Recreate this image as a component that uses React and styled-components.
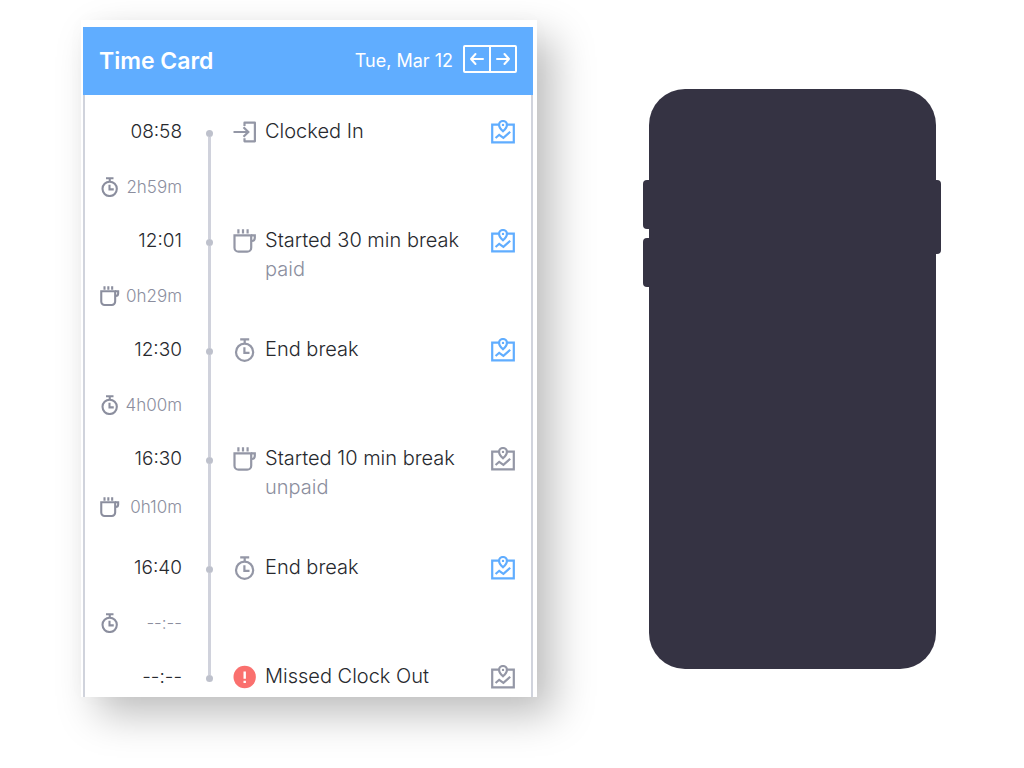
import styled, { createGlobalStyle } from 'styled-components'

const GlobalStyle = createGlobalStyle`
  * {
    box-sizing: border-box;
  }
  body {
    margin: 0;
    background: #fff;
    color: #27292e;
    font-family: Inter, "Open Sans", sans-serif;
  }
`

const Page = styled.main`
  display: grid;
  grid-template-columns: minmax(0, 1fr) 298px;
  column-gap: 106px;
  align-items: start;
  padding: 20px 83px 71px 81px;

  @media (max-width: 900px) {
    grid-template-columns: minmax(0, 1fr);
    row-gap: 40px;
    padding: 20px;
  }
`

const Card = styled.section`
  padding: 7px 4px 0 2px;
  background: #fff;
  box-shadow: 17px 18px 38px rgba(0, 0, 0, 0.25), 0 0 20px rgba(0, 0, 0, 0.02);
`

const CardHeader = styled.header`
  display: flex;
  align-items: center;
  min-height: 68px;
  padding: 0 16px;
  background: #60adff;
  color: #fff;
`

const Title = styled.h1`
  flex: 1;
  margin: 0;
  font-size: 23px;
  font-weight: 600;
  line-height: 28px;
`

const DateLabel = styled.span`
  margin-right: 10px;
  font-size: 18px;
  line-height: 28px;
`

const DayNav = styled.nav`
  display: flex;
  margin-bottom: 4px;
  border: 2px solid #fff;
  border-radius: 2px;
`

const DayButton = styled.button`
  display: flex;
  align-items: center;
  justify-content: center;
  width: 24px;
  height: 24px;
  padding: 0;
  border: 0;
  background: none;
  color: inherit;
  cursor: pointer;

  & + & {
    width: 26px;
    border-left: 2px solid #fff;
  }
`

const Timeline = styled.ol`
  margin: 0;
  padding: 22px 16px 5px 15px;
  border: solid #d0d3dc;
  border-width: 0 2px;
  list-style: none;
`

const Entry = styled.li`
  display: flex;
  min-height: ${(p) => (p.$last ? '29px' : '109px')};
`

const TimeColumn = styled.div`
  width: 82px;
`

const Time = styled.div`
  font-size: 19px;
  font-weight: 300;
  line-height: 30px;
  text-align: right;
`

const Duration = styled.div`
  display: flex;
  align-items: center;
  justify-content: space-between;
  margin-top: ${(p) => (p.$compact ? '19px' : '26px')};
  color: #8b8e9e;
  font-size: 17px;
  font-weight: 300;
  line-height: 28px;
`

const Rail = styled.div`
  display: flex;
  flex-direction: column;
  align-items: center;
  width: 7px;
  margin: 0 20px 0 24px;
`

const Line = styled.span`
  width: 3px;
  flex: ${(p) => (p.$lead ? '0 0 13px' : '1')};
  background: ${(p) => (p.$hidden ? 'transparent' : '#d0d2dc')};
`

const Dot = styled.span`
  width: 7px;
  height: 7px;
  border-radius: 50%;
  background: #bec1cc;
`

const EventIcon = styled.div`
  display: flex;
  width: 24px;
  height: 29px;
  align-items: center;
  margin-right: 8px;
  color: #9497a6;
`

const EventText = styled.div`
  flex: 1;
  min-width: 0;
  font-size: 20px;
  font-weight: 300;
  line-height: 29px;
`

const Note = styled.div`
  color: #8b8e9e;
`

const MapButton = styled.button`
  display: flex;
  align-items: center;
  height: 29px;
  padding: 0;
  border: 0;
  background: none;
  color: ${(p) => (p.$located ? '#60adff' : '#9497a6')};
  cursor: pointer;
`

const Phone = styled.div`
  display: flex;
  margin-top: 69px;
`

const PhoneBody = styled.div`
  flex: 1;
  height: 580px;
  border-radius: 36px;
  background: #353343;
`

const PhoneSide = styled.div`
  display: flex;
  flex-direction: column;
  gap: 9px;
  padding-top: 91px;
`

const SideKey = styled.span`
  width: ${(p) => (p.$right ? '5px' : '6px')};
  height: ${(p) => (p.$right ? '74px' : '49px')};
  border-radius: ${(p) => (p.$right ? '0 4px 4px 0' : '4px 0 0 4px')};
  background: #353343;
`

const Icon = ({ size = 24, stroke = 2.2, children }) => (
  <svg
    width={size}
    height={size}
    viewBox="0 0 24 24"
    fill="none"
    stroke="currentColor"
    strokeWidth={stroke}
    aria-hidden="true"
  >
    {children}
  </svg>
)

const ClockInIcon = (props) => (
  <Icon {...props}>
    <path d="M0.5 12H15M10.5 7.3l4.8 4.7-4.8 4.7" />
    <path d="M11.5 6V2.7H21.9V21.3H11.5V18.2" strokeLinejoin="round" />
  </Icon>
)

const CupIcon = (props) => (
  <Icon {...props}>
    <path d="M1.5 6.3H18.2V18.7a4 4 0 0 1-4 4H5.5a4 4 0 0 1-4-4Z" />
    <path d="M18 6.3H21.8V9a3 3 0 0 1-3 3H18" />
    <path d="M5.4 0.3V4.4M10 0.3V4.4M14.6 0.3V4.4" />
  </Icon>
)

const StopwatchIcon = (props) => (
  <Icon {...props}>
    <circle cx="11.6" cy="14.2" r="8.6" />
    <path d="M7.2 1.4H16.2M11.7 2V5.5" />
    <path d="M11.4 9.3V14.8H16.5" />
  </Icon>
)

const AlertIcon = (props) => (
  <Icon {...props}>
    <circle cx="11.7" cy="12" r="11.2" fill="#fa706e" stroke="none" />
    <path d="M11.7 6.5V13.8M11.7 15.8V18" stroke="#fff" strokeWidth="2.4" />
  </Icon>
)

const MapIcon = () => (
  <Icon>
    <path d="M8 4.6H1.2V22.3H22.8V4.6H16" />
    <path d="M12 11.2C9.6 9.1 8.1 7.2 8.1 4.9a3.9 3.9 0 0 1 7.8 0C15.9 7.2 14.4 9.1 12 11.2Z" />
    <circle cx="12" cy="4.9" r="1.2" fill="currentColor" stroke="none" />
    <path d="M4.6 18L8.2 14.8L12.4 17.8L19.2 11.8" />
  </Icon>
)

const ArrowIcon = ({ back }) => (
  <svg
    width="16"
    height="14"
    viewBox="0 0 16 14"
    fill="none"
    stroke="currentColor"
    strokeWidth="2"
    strokeLinecap="round"
    strokeLinejoin="round"
    aria-hidden="true"
  >
    <path d={back ? 'M14 7H2M6.5 2L2 7l4.5 5' : 'M2 7H14M9.5 2L14 7l-4.5 5'} />
  </svg>
)

const entries = [
  { time: '08:58', icon: ClockInIcon, label: 'Clocked In', located: true, spanIcon: StopwatchIcon, span: '2h59m' },
  { time: '12:01', icon: CupIcon, label: 'Started 30 min break', note: 'paid', located: true, spanIcon: CupIcon, span: '0h29m' },
  { time: '12:30', icon: StopwatchIcon, label: 'End break', located: true, spanIcon: StopwatchIcon, span: '4h00m' },
  { time: '16:30', icon: CupIcon, label: 'Started 10 min break', note: 'unpaid', spanIcon: CupIcon, span: '0h10m', compact: true },
  { time: '16:40', icon: StopwatchIcon, label: 'End break', located: true, spanIcon: StopwatchIcon, span: '--:--' },
  { time: '--:--', icon: AlertIcon, label: 'Missed Clock Out' },
]

const TimelineEntry = ({ entry, first, last }) => {
  const { time, icon: TypeIcon, label, note, located, spanIcon: SpanIcon, span, compact } = entry

  return (
    <Entry $last={last}>
      <TimeColumn>
        <Time>{time}</Time>
        {span && (
          <Duration $compact={compact}>
            <SpanIcon size={20} stroke={2.5} />
            <span>{span}</span>
          </Duration>
        )}
      </TimeColumn>
      <Rail>
        <Line $lead $hidden={first} />
        <Dot />
        <Line $hidden={last} />
      </Rail>
      <EventIcon>
        <TypeIcon />
      </EventIcon>
      <EventText>
        {label}
        {note && <Note>{note}</Note>}
      </EventText>
      <MapButton type="button" $located={located} aria-label={`Show ${label} on map`}>
        <MapIcon />
      </MapButton>
    </Entry>
  )
}

const App = () => {
  return (
    <>
      <GlobalStyle />
      <Page>
        <Card>
          <CardHeader>
            <Title>Time Card</Title>
            <DateLabel>Tue, Mar 12</DateLabel>
            <DayNav aria-label="Day">
              <DayButton type="button" aria-label="Previous day">
                <ArrowIcon back />
              </DayButton>
              <DayButton type="button" aria-label="Next day">
                <ArrowIcon />
              </DayButton>
            </DayNav>
          </CardHeader>
          <Timeline>
            {entries.map((entry, idx) => (
              <TimelineEntry
                key={idx}
                entry={entry}
                first={idx === 0}
                last={idx === entries.length - 1}
              />
            ))}
          </Timeline>
        </Card>
        <Phone>
          <PhoneSide>
            <SideKey />
            <SideKey />
          </PhoneSide>
          <PhoneBody />
          <PhoneSide>
            <SideKey $right />
          </PhoneSide>
        </Phone>
      </Page>
    </>
  )
}

export default App
